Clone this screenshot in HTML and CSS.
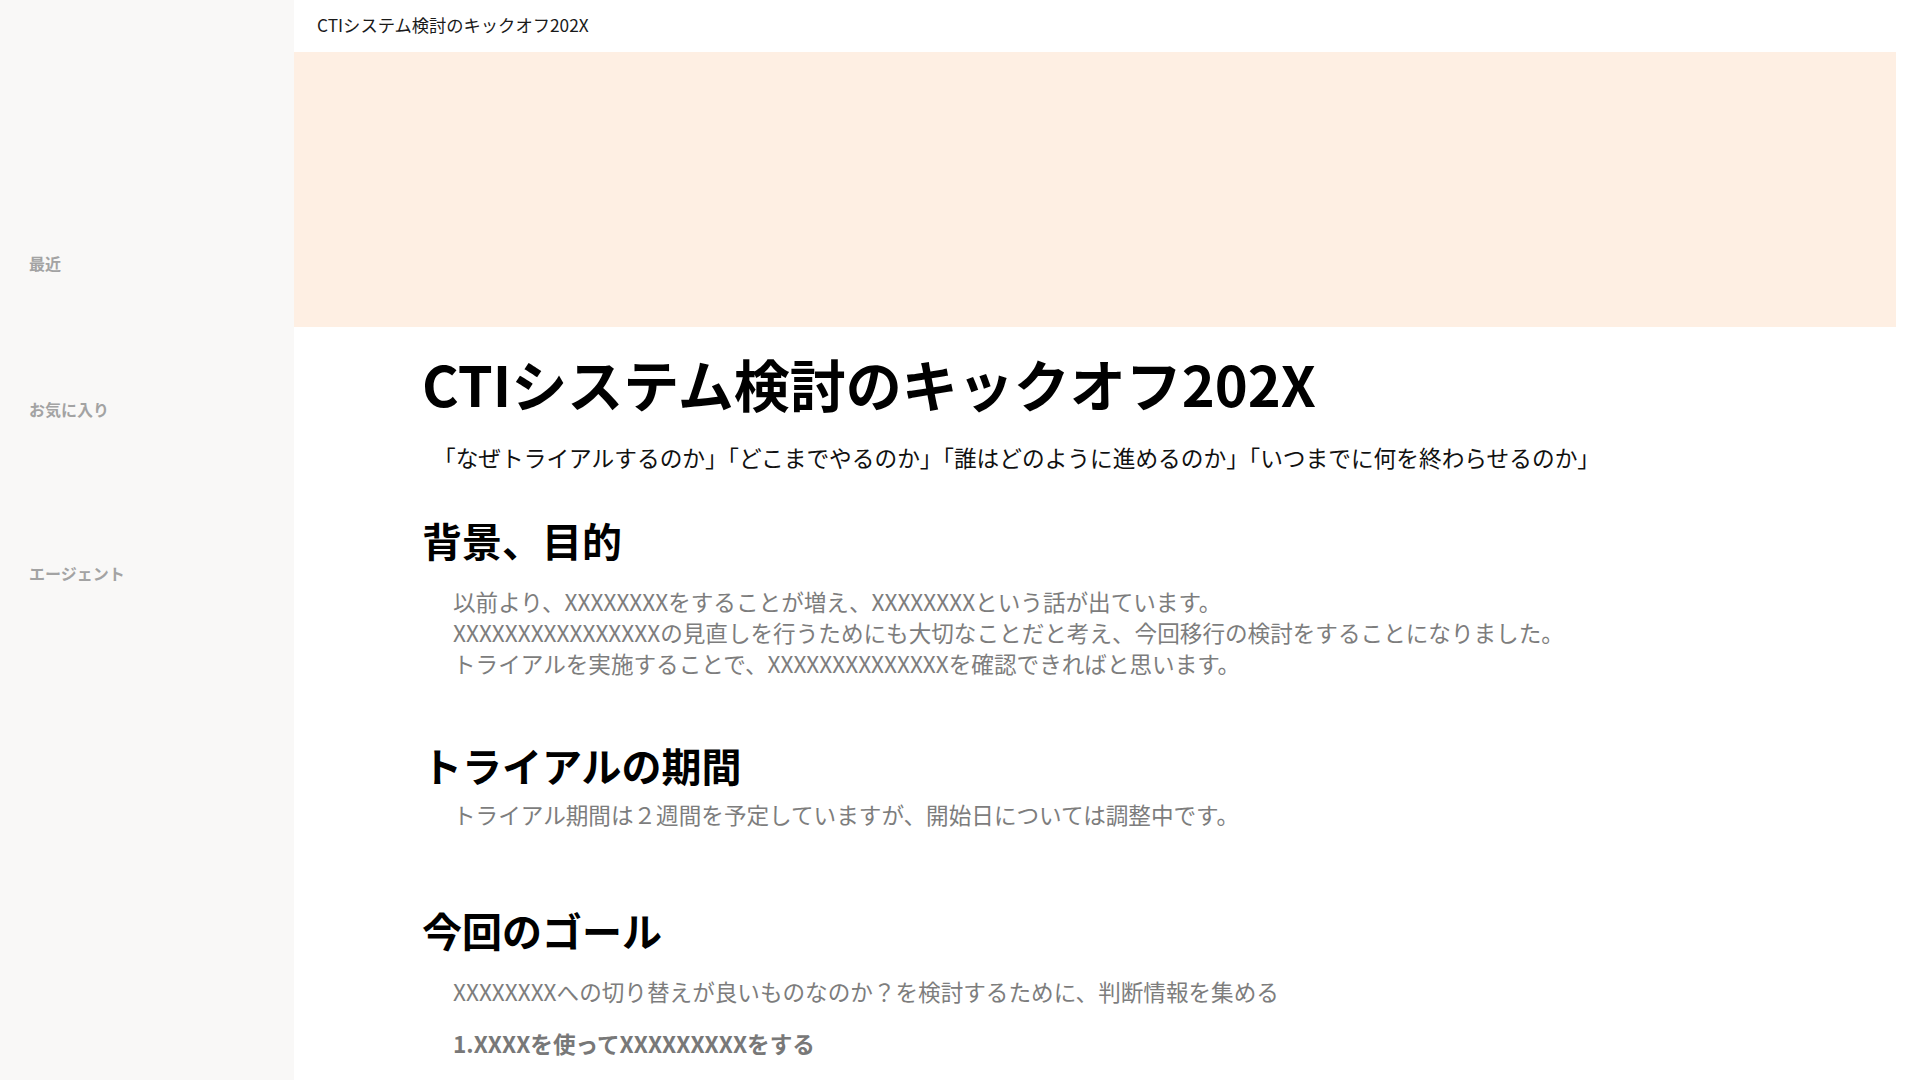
FILE: index.html
```html
<!DOCTYPE html>
<html lang="ja">
<head>
  <meta charset="UTF-8" />
  <meta name="viewport" content="width=device-width, initial-scale=1.0"/>
  <title>CTIシステム検討のキックオフ202X</title>
  <link rel="stylesheet" href="styles.css">
</head>
<body>
  <aside class="sidebar">
    <div class="side-group side-recent">最近</div>
    <div class="side-group side-fav">お気に入り</div>
    <div class="side-group side-agent">エージェント</div>
  </aside>

  <main class="main">
    <header class="topbar">
      <span class="crumb">CTIシステム検討のキックオフ202X</span>
    </header>

    <div class="cover"></div>

    <article class="page">
      <h1 class="page-title">CTIシステム検討のキックオフ202X</h1>
      <p class="lead">「なぜトライアルするのか」「どこまでやるのか」「誰はどのように進めるのか」「いつまでに何を終わらせるのか」</p>

      <h2 class="sec sec-first">背景、目的</h2>
      <p class="text text-first">以前より、XXXXXXXXをすることが増え、XXXXXXXXという話が出ています。<br>XXXXXXXXXXXXXXXXの見直しを行うためにも大切なことだと考え、今回移行の検討をすることになりました。<br>トライアルを実施することで、XXXXXXXXXXXXXXを確認できればと思います。</p>

      <h2 class="sec sec-period">トライアルの期間</h2>
      <p class="text text-period">トライアル期間は２週間を予定していますが、開始日については調整中です。</p>

      <h2 class="sec sec-goal">今回のゴール</h2>
      <p class="text text-goal">XXXXXXXXへの切り替えが良いものなのか？を検討するために、判断情報を集める</p>
      <p class="text text-strong">1.XXXXを使ってXXXXXXXXXをする</p>
    </article>
  </main>
</body>
</html>
```

FILE: styles.css
```css
/* Reset */
* {
  margin: 0;
  padding: 0;
  box-sizing: border-box;
}

html, body {
  height: 100%;
}

body {
  font-family: "Noto Sans CJK JP", "Noto Sans", sans-serif;
  color: #111;
  background: #fff;
  display: flex;
  overflow: hidden;
}

/* Sidebar */
.sidebar {
  width: 294px;
  flex-shrink: 0;
  background: #f9f8f7;
  padding-left: 29px;
}

.side-group {
  font-size: 16px;
  font-weight: 700;
  line-height: 22px;
  color: #a3a3a3;
}

.side-recent { margin-top: 252px; }
.side-fav { margin-top: 124px; }
.side-agent { margin-top: 142px; }

/* Main */
.main {
  flex: 1;
  display: flex;
  flex-direction: column;
}

.topbar {
  height: 52px;
  display: flex;
  align-items: center;
  padding-left: 23px;
  padding-bottom: 3px;
}

.crumb {
  font-size: 17.3px;
  color: #1a1a1a;
}

.cover {
  height: 275px;
  margin-right: 24px;
  background: #feefe3;
}

.page {
  padding-left: 128px;
}

.page-title {
  font-size: 56px;
  font-weight: 700;
  line-height: 73px;
  margin-top: 19px;
  color: #000;
}

.lead {
  font-size: 22.7px;
  line-height: 36px;
  margin-top: 21px;
  padding-left: 11px;
  color: #111;
}

.sec {
  font-size: 40px;
  font-weight: 700;
  line-height: 52px;
  color: #000;
}

.sec-first { margin-top: 38px; }
.sec-period { margin-top: 59px; }
.sec-goal { margin-top: 74px; }

.text {
  font-size: 22.6px;
  line-height: 31.2px;
  color: #7d7d7d;
  padding-left: 31px;
}

.text-first { margin-top: 20px; }
.text-period { margin-top: 8px; }
.text-goal { margin-top: 20px; }

.text-strong {
  font-weight: 700;
  color: #787878;
  margin-top: 21px;
}
```
